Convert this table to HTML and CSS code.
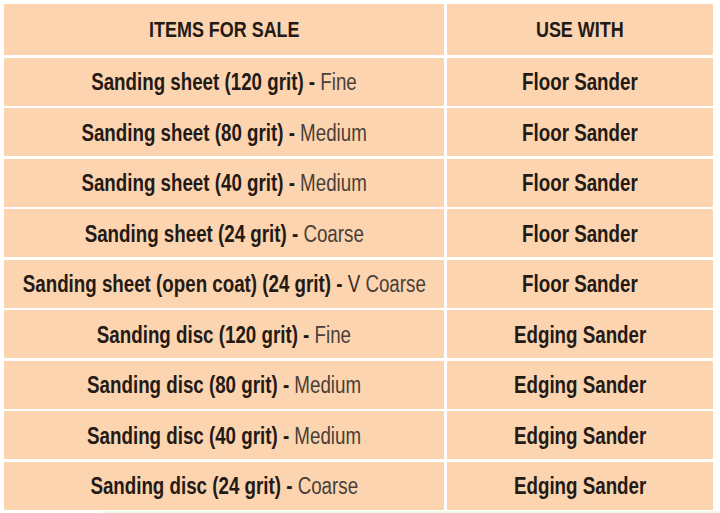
FILE: index.html
```html
<!DOCTYPE html>
<html lang="en">
<head>
<meta charset="utf-8">
<title>Sanding supplies</title>
<link rel="stylesheet" href="styles.css">
</head>
<body>
<div class="sheet">
  <div class="grid">
    <div class="cell head"><span class="t">ITEMS FOR SALE</span></div>
    <div class="cell head"><span class="t">USE WITH</span></div>

    <div class="cell"><span class="t">Sanding sheet (120 grit) - <span class="grade">Fine</span></span></div>
    <div class="cell"><span class="t">Floor Sander</span></div>

    <div class="cell"><span class="t">Sanding sheet (80 grit) - <span class="grade">Medium</span></span></div>
    <div class="cell"><span class="t">Floor Sander</span></div>

    <div class="cell"><span class="t">Sanding sheet (40 grit) - <span class="grade">Medium</span></span></div>
    <div class="cell"><span class="t">Floor Sander</span></div>

    <div class="cell"><span class="t">Sanding sheet (24 grit) - <span class="grade">Coarse</span></span></div>
    <div class="cell"><span class="t">Floor Sander</span></div>

    <div class="cell"><span class="t">Sanding sheet (open coat) (24 grit) - <span class="grade"><span class="v">V</span> Coarse</span></span></div>
    <div class="cell"><span class="t">Floor Sander</span></div>

    <div class="cell"><span class="t">Sanding disc (120 grit) - <span class="grade">Fine</span></span></div>
    <div class="cell"><span class="t">Edging Sander</span></div>

    <div class="cell"><span class="t">Sanding disc (80 grit) - <span class="grade">Medium</span></span></div>
    <div class="cell"><span class="t">Edging Sander</span></div>

    <div class="cell"><span class="t">Sanding disc (40 grit) - <span class="grade">Medium</span></span></div>
    <div class="cell"><span class="t">Edging Sander</span></div>

    <div class="cell"><span class="t">Sanding disc (24 grit) - <span class="grade">Coarse</span></span></div>
    <div class="cell"><span class="t">Edging Sander</span></div>
  </div>
  <div class="strip"></div>
</div>
</body>
</html>
```

FILE: styles.css
```css
html, body {
  margin: 0;
  padding: 0;
  background: #ffffff;
}

body {
  font-family: "Liberation Sans Narrow", "Liberation Sans", Arial, sans-serif;
  color: #231a15;
}

.sheet {
  width: 720px;
  height: 513px;
  padding: 4px 0 0 4px;
  box-sizing: border-box;
  overflow: hidden;
}

.grid {
  display: grid;
  grid-template-columns: 440px 266px;
  grid-template-rows: 51px repeat(9, 48px);
  column-gap: 3px;
  row-gap: 2.5px;
}

.cell {
  background: #fdd4b0;
  display: flex;
  align-items: center;
  justify-content: center;
  font-weight: bold;
  font-size: 23px;
  white-space: nowrap;
  padding-top: 2px;
  box-sizing: border-box;
}

.t {
  display: inline-block;
  transform: scaleX(0.815);
  transform-origin: center center;
}

.head {
  font-size: 22px;
  padding-top: 1px;
}

.grade {
  font-weight: normal;
  color: #4a3f38;
}

.v {
  color: #3a2a20;
}

.strip {
  margin: 1px 0 0 99px;
  height: 4px;
  background: #effbe6;
}
```
